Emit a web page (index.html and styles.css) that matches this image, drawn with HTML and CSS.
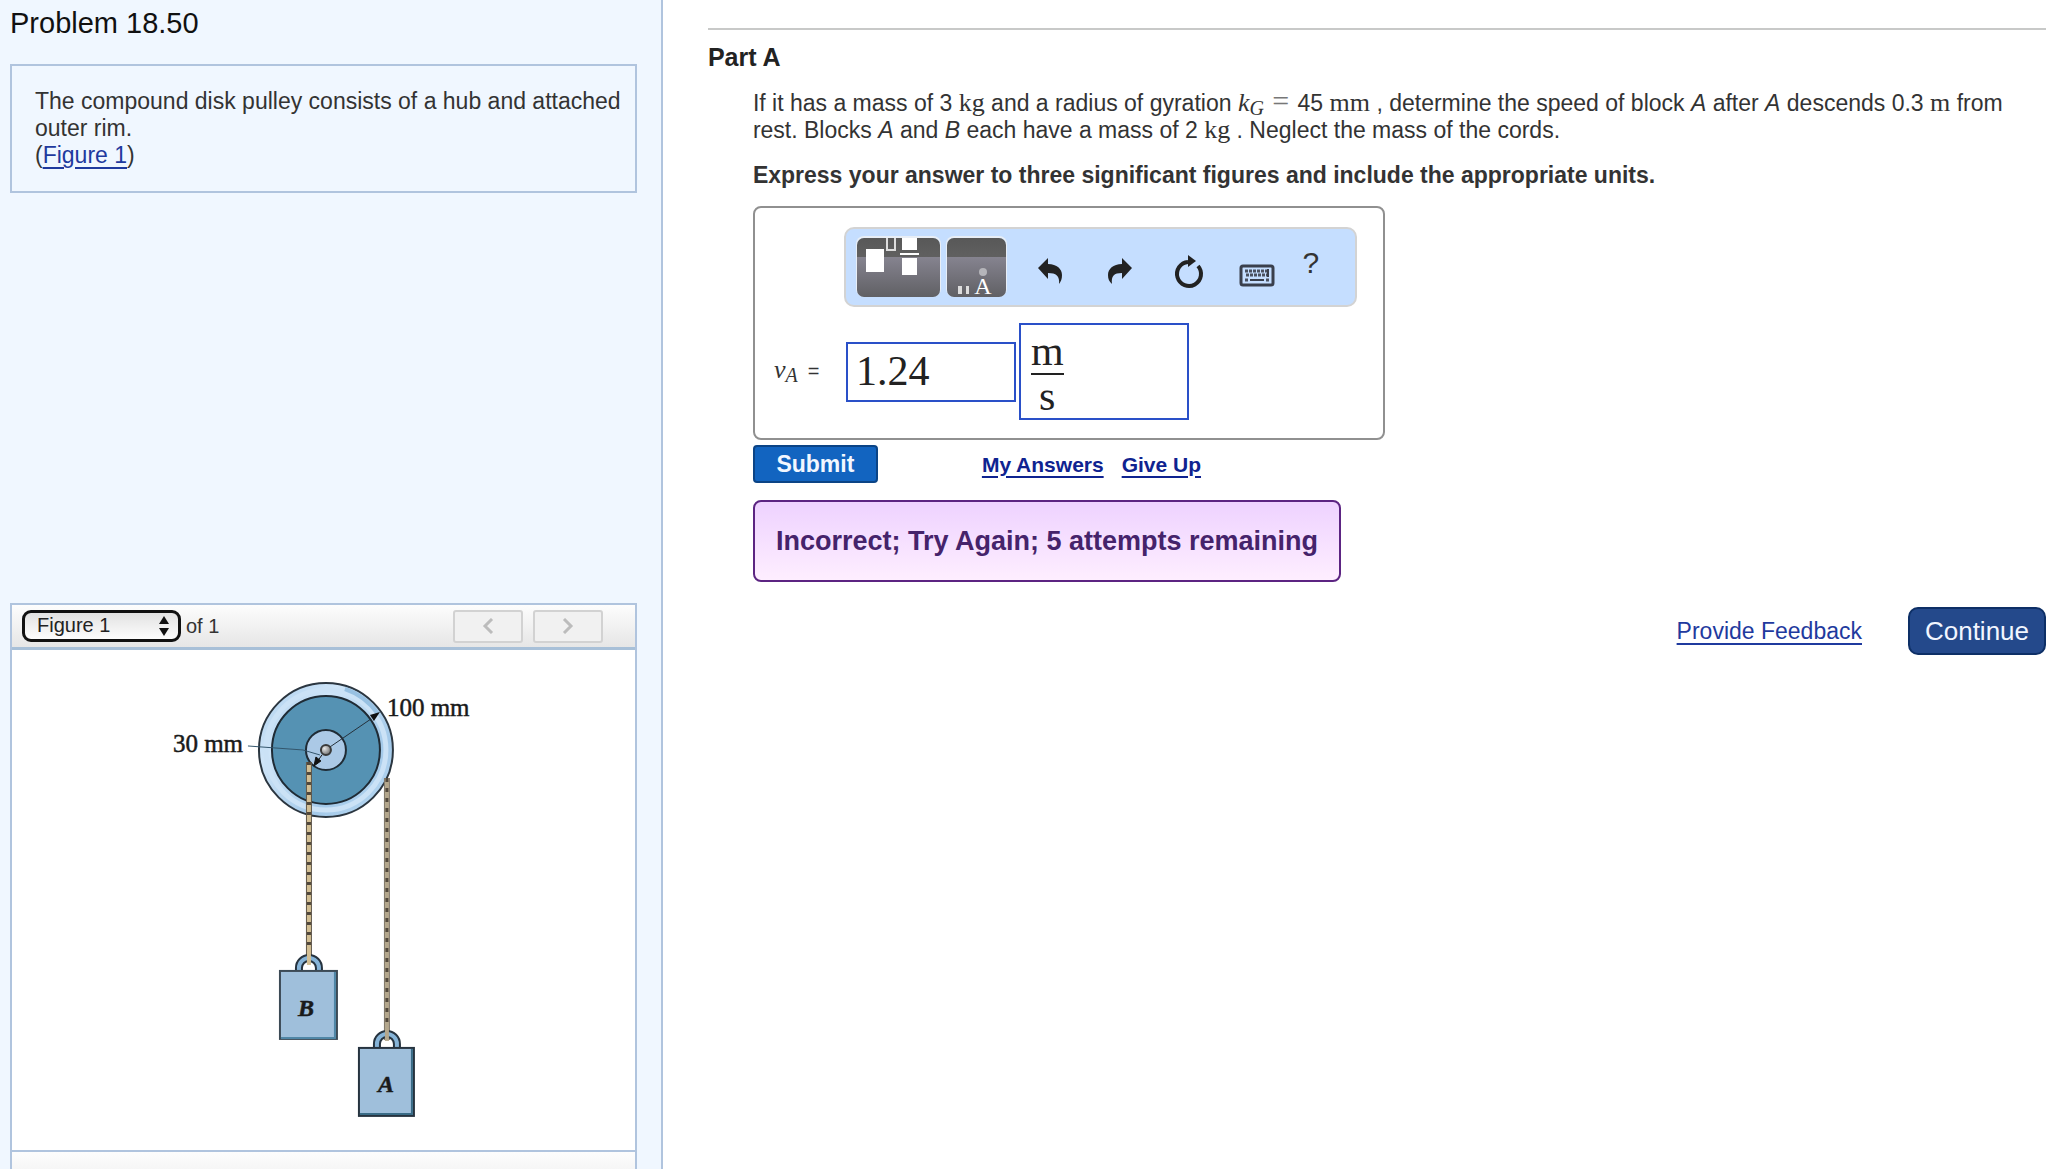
FILE: index.html
```html
<!DOCTYPE html>
<html lang="en">
<head>
    <meta charset="UTF-8">
    <meta name="viewport" content="width=device-width, initial-scale=1.0">
    <title>Problem 18.50</title>
    <link rel="stylesheet" href="styles.css">
</head>
<body>
    <div class="page">
        <aside class="sidebar">
            <h1>Problem 18.50</h1>
            <div class="intro">
                The compound disk pulley consists of a hub and attached outer rim.<br>
                (<a href="#figure">Figure 1</a>)
            </div>
            <section class="figure-panel" id="figure">
                <div class="figure-bar">
                    <div class="select-wrap">
                        <select id="figure-select" aria-label="Figure">
                            <option>Figure 1</option>
                        </select>
                        <svg class="select-arrows" width="12" height="20" viewBox="0 0 12 20" aria-hidden="true">
                            <path d="M6 0l5 8H1zM6 20l5-8H1z" fill="#111"/>
                        </svg>
                    </div>
                    <label for="figure-select">of 1</label>
                    <div class="figure-nav">
                        <button type="button" aria-label="Previous figure">
                            <svg width="12" height="16" viewBox="0 0 12 16"><path d="M10 1L3 8l7 7" fill="none" stroke="#bcbcbc" stroke-width="3"/></svg>
                        </button>
                        <button type="button" aria-label="Next figure">
                            <svg width="12" height="16" viewBox="0 0 12 16"><path d="M2 1l7 7-7 7" fill="none" stroke="#bcbcbc" stroke-width="3"/></svg>
                        </button>
                    </div>
                </div>
                <div class="figure-body">
                    <svg viewBox="13 650 623 500" role="img" aria-label="Compound pulley with blocks A and B">
                        <defs>
                            <linearGradient id="rim" x1="0" y1="0" x2="1" y2="1">
                                <stop offset="0" stop-color="#a9cdec"/>
                                <stop offset="0.3" stop-color="#cfe5f8"/>
                                <stop offset="0.7" stop-color="#a3c9e9"/>
                                <stop offset="1" stop-color="#bedcf4"/>
                            </linearGradient>
                            <radialGradient id="pin" cx="0.35" cy="0.35" r="0.7">
                                <stop offset="0" stop-color="#e8e8e8"/>
                                <stop offset="1" stop-color="#6f6f6f"/>
                            </radialGradient>
                        </defs>

                        <!-- disk -->
                        <circle cx="327" cy="750" r="67" fill="url(#rim)" stroke="#2b3640" stroke-width="2"/>
                        <circle cx="327" cy="750" r="60" fill="none" stroke="#cbe2f6" stroke-width="5"/>
                        <path d="M346 689A64 64 0 0 1 379 714" fill="none" stroke="#98c1e2" stroke-width="4"/>
                        <circle cx="327" cy="750" r="54" fill="#5592b3" stroke="#1f2b35" stroke-width="2"/>
                        <circle cx="327" cy="750" r="20" fill="#abc9e6" stroke="#1f2b35" stroke-width="2"/>

                        <!-- cords -->
                        <path d="M310 762V962" stroke="#60564a" stroke-width="6"/>
                        <path d="M310 762V962" stroke="#d3bf94" stroke-width="4"/>
                        <path d="M310 762V962" stroke="#51483c" stroke-width="4" stroke-dasharray="3 7"/>
                        <path d="M388 778V1040" stroke="#7f776a" stroke-width="6"/>
                        <path d="M388 778V1040" stroke="#b4a78c" stroke-width="4"/>
                        <path d="M388 778V1040" stroke="#51483c" stroke-width="3" stroke-dasharray="4 6"/>

                        <!-- radius leaders -->
                        <path d="M331 747L372 719" stroke="#25303a" stroke-width="1"/>
                        <path d="M381 712l-6 9-4-6z" fill="#111"/>
                        <path d="M249 746L304 750L321 755" fill="none" stroke="#33556b" stroke-width="1"/>
                        <path d="M323 755L318 762" stroke="#111" stroke-width="1"/>
                        <path d="M315 766l2-9 5 4z" fill="#111" stroke="#111"/>
                        <circle cx="327" cy="750" r="5" fill="url(#pin)" stroke="#3a3a3a" stroke-width="2"/>
                        <text class="dim" x="174" y="752">30 mm</text>
                        <text class="dim" x="388" y="716">100 mm</text>

                        <!-- block B -->
                        <path d="M300 972v-4a10 10 0 0 1 20 0v4" fill="none" stroke="#26333f" stroke-width="8"/>
                        <path d="M300 972v-4a10 10 0 0 1 20 0v4" fill="none" stroke="#86b4d8" stroke-width="4"/>
                        <path d="M310 952V965" stroke="#d3bf94" stroke-width="4"/>
                        <rect x="281" y="971" width="57" height="68" fill="#9fbfdb" stroke="#3c4a55" stroke-width="2"/>
                        <path d="M336 972V1038H282" fill="none" stroke="#4f86a6" stroke-width="2"/>
                        <text class="block" x="307" y="1016">B</text>

                        <!-- block A -->
                        <path d="M378 1048v-4a10 10 0 0 1 20 0v4" fill="none" stroke="#26333f" stroke-width="8"/>
                        <path d="M378 1048v-4a10 10 0 0 1 20 0v4" fill="none" stroke="#86b4d8" stroke-width="4"/>
                        <path d="M388 1028V1041" stroke="#b4a78c" stroke-width="4"/>
                        <rect x="360" y="1048" width="55" height="68" fill="#9fbfdb" stroke="#26333f" stroke-width="2"/>
                        <path d="M413 1049V1114H361" fill="none" stroke="#396b86" stroke-width="2"/>
                        <text class="block" x="387" y="1092">A</text>
                    </svg>
                </div>
                <div class="figure-footer"></div>
            </section>
        </aside>

        <main class="content">
            <h2>Part A</h2>
            <div class="part">
                <p>If it has a mass of 3 <span class="unit">kg</span> and a radius of gyration <span class="math"><i>k</i><sub>G</sub></span> <span class="math equals">=</span> 45 <span class="unit">mm</span> , determine the speed of block <i>A</i> after <i>A</i> descends 0.3 <span class="unit">m</span> from rest. Blocks <i>A</i> and <i>B</i> each have a mass of 2 <span class="unit">kg</span> . Neglect the mass of the cords.</p>
                <p class="instructions">Express your answer to three significant figures and include the appropriate units.</p>

                <form class="answer-box" id="answer-form">
                    <div class="toolbar">
                        <button type="button" class="tool-dark" aria-label="Templates">
                            <svg width="83" height="59" viewBox="0 0 83 59">
                                <path d="M9 11h18v23H9zM45 0h15v12H45zM45 20h15v17H45zM43 15h19v2H43z" fill="#fff"/>
                                <path d="M30 0v12h8V0" fill="none" stroke="#ddd" stroke-width="2"/>
                            </svg>
                        </button>
                        <button type="button" class="tool-dark" aria-label="Units">
                            <svg width="59" height="59" viewBox="0 0 59 59">
                                <path d="M11 48h4v8h-4zM19 48h3v8h-3z" fill="#ddd"/>
                                <circle cx="36" cy="34" r="4" fill="#b5b5ba"/>
                                <text class="glyph" x="36" y="56">A</text>
                            </svg>
                        </button>
                        <div class="tool-icons">
                            <button type="button" aria-label="Undo">
                                <svg width="36" height="36" viewBox="0 0 36 36"><path d="M6 14L16 4v6c9 0 14 5 14 11 0 4-1 6-3 9 1-8-3-11-11-11v6z" fill="#222"/></svg>
                            </button>
                            <button type="button" aria-label="Redo">
                                <svg width="36" height="36" viewBox="0 0 36 36"><path d="M31 14L21 4v6C12 10 7 15 7 21c0 4 1 6 4 9-1-8 2-11 10-11v6z" fill="#222"/></svg>
                            </button>
                            <button type="button" aria-label="Reset">
                                <svg width="36" height="36" viewBox="0 0 36 36">
                                    <path d="M28 12A12 12 0 1 1 18 8" fill="none" stroke="#222" stroke-width="4"/>
                                    <path d="M18 1l8 6-8 6z" fill="#222"/>
                                </svg>
                            </button>
                            <button type="button" aria-label="Keyboard">
                                <svg width="36" height="36" viewBox="0 0 36 36">
                                    <rect x="2" y="12" width="32" height="19" rx="2" fill="#c5deff" stroke="#3a3f4c" stroke-width="3"/>
                                    <path d="M6 17h23M7 21h22M6 26h4M27 26h4" stroke="#4b5160" stroke-width="3" stroke-dasharray="3 1"/>
                                    <path d="M11 26h14M29 15v8" stroke="#3a3f4c" stroke-width="2"/>
                                </svg>
                            </button>
                        </div>
                        <button type="button" class="help" aria-label="Help">?</button>
                    </div>
                    <div class="answer-row">
                        <label for="value"><span class="math"><i>v</i><sub>A</sub></span><span class="sign">=</span></label>
                        <input type="text" id="value" value="1.24">
                        <div class="units" role="textbox" aria-label="Units" contenteditable="true" spellcheck="false">
                            <span class="fraction"><span class="top">m</span><span>s</span></span>
                        </div>
                    </div>
                </form>

                <div class="actions">
                    <button type="submit" class="submit" form="answer-form">Submit</button>
                    <a href="#answers">My Answers</a>
                    <a href="#giveup">Give Up</a>
                </div>

                <div class="feedback">Incorrect; Try Again; 5 attempts remaining</div>
            </div>

            <div class="bottom">
                <a href="#feedback">Provide Feedback</a>
                <button type="button" class="continue">Continue</button>
            </div>
        </main>
    </div>
</body>
</html>
```
FILE: styles.css
```css
* {
    box-sizing: border-box;
}

body {
    margin: 0;
    font-family: "Liberation Sans", Arial, sans-serif;
    font-size: 23px;
    line-height: 27px;
    color: #333;
    background: #fff;
}

button, input, select {
    font-family: inherit;
    margin: 0;
}

a {
    color: #1f3a9e;
    text-underline-offset: 4px;
}

.page {
    display: flex;
    height: 100vh;
    overflow: hidden;
}

/* left column */
.sidebar {
    flex: 0 0 32.4%;
    display: flex;
    flex-direction: column;
    padding: 6px 24px 0 10px;
    background: #f0f7ff;
    border-right: 2px solid #b0c4de;
}

.sidebar h1 {
    margin: 0 0 24px;
    font-size: 29px;
    font-weight: 400;
    line-height: 34px;
    color: #111;
}

.intro {
    padding: 22px 12px 22px 23px;
    border: 2px solid #b0c4de;
}

.figure-panel {
    flex: 1;
    display: flex;
    flex-direction: column;
    margin-top: 410px;
    background: #fff;
    border: 2px solid #b0c4de;
    border-bottom: 0;
    overflow: hidden;
}

.figure-bar {
    display: flex;
    align-items: center;
    flex: none;
    height: 45px;
    padding: 0 32px 0 10px;
    background: linear-gradient(#fdfdfd, #e6e6e6);
    border-bottom: 3px solid #a8c0d8;
    font-size: 20px;
}

.figure-bar label {
    margin-left: 5px;
}

.select-wrap {
    position: relative;
}

.select-wrap select {
    appearance: none;
    display: block;
    width: 159px;
    height: 32px;
    padding: 0 30px 2px 12px;
    border: 3px solid #111;
    border-radius: 9px;
    background: linear-gradient(#e2e2e2, #fdfdfd);
    color: #222;
    font-size: 20px;
}

.select-arrows {
    position: absolute;
    top: 6px;
    right: 11px;
    pointer-events: none;
}

.figure-nav {
    display: flex;
    gap: 10px;
    margin-left: auto;
}

.figure-nav button {
    display: flex;
    align-items: center;
    justify-content: center;
    width: 70px;
    height: 33px;
    padding: 0;
    border: 2px solid #d2d2d2;
    border-radius: 3px;
    background: #f1f1f1;
}

.figure-body {
    flex: none;
}

.figure-body svg {
    display: block;
    width: 100%;
}

.dim, .block {
    font-family: "Liberation Serif", "Times New Roman", serif;
    font-size: 25px;
    fill: #1a1a1a;
    stroke: #1a1a1a;
    stroke-width: 0.5px;
}

.block {
    font-size: 24px;
    font-weight: 700;
    font-style: italic;
    text-anchor: middle;
}

.figure-footer {
    flex: 1;
    border-top: 2px solid #b0c4de;
    background: linear-gradient(#fdfdfd, #f6f6f6);
}

/* right column */
.content {
    flex: 1;
    margin: 28px 0 0 45px;
    border-top: 2px solid #c8c9c8;
}

.content h2 {
    margin: 14px 0 0;
    font-size: 25px;
    line-height: 27px;
    color: #222;
}

.part {
    padding: 19px 0 0 45px;
}

.part p {
    margin: 0;
}

.part .instructions {
    margin: 18px 0 17px;
    font-weight: 700;
}

.unit, .math {
    font-family: "Liberation Serif", "Times New Roman", serif;
    font-size: 26px;
    line-height: 0;
}

.math sub {
    font-size: 20px;
    font-style: italic;
    line-height: 0;
    vertical-align: -4px;
}

.math.equals {
    margin: 0 2px;
    font-size: 30px;
    color: #777;
}

.answer-box {
    max-width: 632px;
    padding: 19px 26px 18px 19px;
    border: 2px solid #909090;
    border-radius: 8px;
}

.toolbar {
    display: flex;
    align-items: center;
    gap: 7px;
    height: 80px;
    margin-left: 70px;
    padding: 0 10px 0 11px;
    background: #c5deff;
    border: 2px solid #d3d3d3;
    border-radius: 10px;
}

.toolbar button {
    padding: 0;
    border: 0;
    background: none;
}

.toolbar svg {
    display: block;
    overflow: visible;
}

.toolbar .tool-dark {
    border-radius: 7px;
    background: linear-gradient(#585858, #606060 32%, #85838f 33%, #606064);
    box-shadow: 0 -1px 0 1px #e8eef6;
}

.glyph {
    font-family: "Liberation Serif", "Times New Roman", serif;
    font-size: 24px;
    fill: #fff;
    text-anchor: middle;
}

.tool-icons {
    display: flex;
    margin: 10px 0 0 3px;
}

.tool-icons button {
    display: flex;
    justify-content: center;
    width: 69px;
}

.toolbar .help {
    align-self: flex-start;
    width: 30px;
    margin-top: 18px;
    margin-left: -3px;
    font-size: 30px;
    line-height: 32px;
    color: #333;
}

.answer-row {
    display: flex;
    align-items: center;
    margin-top: 16px;
}

.answer-row label {
    width: 72px;
    font-size: 20px;
}

.sign {
    margin-left: 10px;
}

.answer-row input, .units {
    width: 170px;
    border: 2px solid #2a50c8;
    background: #fff;
    color: #222;
    font-family: "Liberation Serif", "Times New Roman", serif;
    font-size: 42px;
    outline: none;
}

.answer-row input {
    height: 60px;
    padding: 0 8px 2px;
}

.units {
    height: 97px;
    margin-left: 3px;
    padding: 5px 10px;
}

.fraction {
    display: inline-flex;
    flex-direction: column;
    align-items: center;
    line-height: 43px;
}

.fraction .top {
    border-bottom: 2px solid #222;
}

.actions {
    display: flex;
    align-items: center;
    margin-top: 5px;
    font-size: 21px;
    font-weight: 700;
}

.actions a {
    margin-right: 18px;
    color: #0f2390;
}

.submit {
    width: 125px;
    height: 38px;
    margin-right: 104px;
    padding: 0;
    border: 2px solid #0b4486;
    border-radius: 4px;
    background: #1264c0;
    color: #f2f7ff;
    font-size: 23px;
    font-weight: 700;
}

.feedback {
    width: fit-content;
    margin-top: 17px;
    padding: 26px 21px 25px;
    border: 2px solid #5c2482;
    border-radius: 8px;
    background: linear-gradient(#eed2ff, #feeeff);
    color: #45236b;
    font-size: 27px;
    font-weight: 700;
}

.bottom {
    display: flex;
    align-items: center;
    justify-content: flex-end;
    gap: 46px;
    margin-top: 25px;
}

.continue {
    width: 138px;
    height: 48px;
    padding: 0;
    border: 2px solid #0d2f66;
    border-radius: 10px;
    background: #24498b;
    color: #f2f6ff;
    font-size: 26px;
}
```
